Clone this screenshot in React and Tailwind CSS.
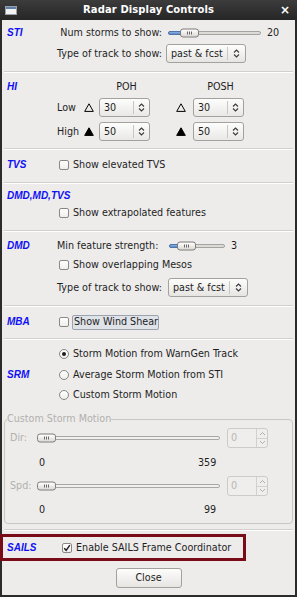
import React from "react";

function UpDown({ color = "#3a3a3a" }) {
  return (
    <svg width="7" height="11" viewBox="0 0 7 11">
      <path d="M1 4.5 L3.5 2 L6 4.5 M1 6.5 L3.5 9 L6 6.5" fill="none" stroke={color} strokeWidth="1.1" />
    </svg>
  );
}

function Combo({ className = "" }) {
  return (
    <div className={"h-[19px] w-[80px] flex items-center rounded-[3px] border border-[#a3a19d] bg-gradient-to-b from-[#fdfdfc] to-[#e6e5e2] " + className}>
      <span className="pl-[4px] flex-1 whitespace-nowrap">past &amp; fcst</span>
      <span className="w-px h-[13px] bg-[#c9c7c3]" />
      <span className="w-[17px] flex justify-center"><UpDown /></span>
    </div>
  );
}

function Spin({ value, className = "" }) {
  return (
    <div className={"h-[19px] w-[51px] flex items-center rounded-[3px] border border-[#a3a19d] bg-gradient-to-b from-[#fdfdfc] to-[#e9e8e5] " + className}>
      <span className="pl-[4px] flex-1">{value}</span>
      <span className="w-px h-[13px] bg-[#c9c7c3]" />
      <span className="w-[15px] flex justify-center"><UpDown /></span>
    </div>
  );
}

function DisabledSpin() {
  return (
    <div className="h-[20px] w-[41px] flex rounded-[3px] border border-[#cdcbc7] bg-[#efeeec]">
      <span className="flex-1 pl-[3px] flex items-center text-[#b8b6b2]">0</span>
      <div className="w-[11px] flex flex-col border-l border-[#d3d1cd]">
        <div className="flex-1 flex items-center justify-center border-b border-[#d3d1cd]">
          <svg width="7" height="5" viewBox="0 0 7 5"><path d="M1 4 L3.5 1.5 L6 4" fill="none" stroke="#b0aeaa" strokeWidth="1" /></svg>
        </div>
        <div className="flex-1 flex items-center justify-center">
          <svg width="7" height="5" viewBox="0 0 7 5"><path d="M1 1 L3.5 3.5 L6 1" fill="none" stroke="#b0aeaa" strokeWidth="1" /></svg>
        </div>
      </div>
    </div>
  );
}

function Thumb({ left }) {
  return (
    <div
      className="absolute top-1/2 -translate-y-1/2 w-[19px] h-[9px] rounded-[3px] border border-[#7f7d79] bg-gradient-to-b from-[#ffffff] to-[#dcdad6] flex items-center justify-center gap-[1px]"
      style={{ left }}
    >
      <span className="w-px h-[3px] bg-[#6b6965]" />
      <span className="w-px h-[3px] bg-[#6b6965]" />
      <span className="w-px h-[3px] bg-[#6b6965]" />
    </div>
  );
}

function Slider({ width, thumb, className = "", disabled = false }) {
  return (
    <div className={"relative h-[10px] shrink-0 " + className} style={{ width }}>
      <div className={"absolute left-0 right-0 top-[3px] h-[4px] rounded-full border " + (disabled ? "border-[#a9a7a3] bg-[#f1f0ee]" : "border-[#a5a39f] bg-[#dcdbd8]")} />
      {!disabled && (
        <div className="absolute left-0 top-[3px] h-[4px] rounded-full border border-[#4d74ad] bg-gradient-to-b from-[#8fb2e0] to-[#5a89c8]" style={{ width: thumb + 4 }} />
      )}
      <Thumb left={thumb} />
    </div>
  );
}

function Check({ checked = false }) {
  return (
    <div className="w-[10px] h-[10px] shrink-0 rounded-[2px] border border-[#8a8884] bg-gradient-to-b from-white to-[#efeeec] flex items-center justify-center">
      {checked && (
        <svg width="8" height="8" viewBox="0 0 8 8"><path d="M1.2 4.2 L3.2 6.3 L6.8 1.2" fill="none" stroke="#1e1e1e" strokeWidth="1.4" /></svg>
      )}
    </div>
  );
}

function Radio({ checked = false }) {
  return (
    <div className="w-[10px] h-[10px] shrink-0 rounded-full border border-[#8a8884] bg-gradient-to-b from-white to-[#efeeec] flex items-center justify-center">
      {checked && <div className="w-[4px] h-[4px] rounded-full bg-[#1e1e1e]" />}
    </div>
  );
}

function Tri({ filled }) {
  return (
    <svg width="10" height="9" viewBox="0 0 10 9">
      <path d="M5 0.8 L9.3 8.4 L0.7 8.4 Z" fill={filled ? "#000" : "none"} stroke="#000" strokeWidth="1" strokeLinejoin="miter" />
    </svg>
  );
}

const labelFont = "font-['Liberation_Sans',Arial,sans-serif] text-[10px] font-bold italic text-[#1010f5]";

function Label({ children, h = "h-[16px]" }) {
  return (
    <div className={"w-[55px] shrink-0 pl-[5px] flex items-center " + labelFont + " " + h}>{children}</div>
  );
}

function Sep() {
  return <div className="mx-[2px] h-[2px] border-t border-[#d2d0cc] border-b border-b-white shrink-0" />;
}

export default function App() {
  return (
    <div className="w-[297px] h-[597px] bg-[#2b2b2b] flex flex-col font-['DejaVu_Sans',sans-serif] text-[9.6px] text-[#1e1e1e] leading-none">
      {/* title bar */}
      <div className="h-[20px] shrink-0 grid grid-cols-[1fr_auto_1fr] items-center bg-gradient-to-b from-[#3c3c3c] to-[#262626]">
        <div className="pl-[5px] flex">
          <div className="w-[12px] h-[9px] border border-[#9aa0a8] bg-[#f2f2f2] flex flex-col">
            <div className="h-[2px] bg-[#5d7ea8]" />
          </div>
        </div>
        <div className="font-bold text-white text-[10px] tracking-[0.1px]">Radar Display Controls</div>
        <div className="flex justify-end pr-[7px] text-white font-bold text-[12px]">×</div>
      </div>

      <div className="flex-1 mx-[2px] mb-[2px] bg-[#edeceb] flex flex-col">
        {/* STI */}
        <div className="flex pt-[4px] pb-[8px]">
          <Label h="h-[18px]">STI</Label>
          <div className="flex flex-col gap-[2px]">
            <div className="h-[18px] flex items-center">
              <span className="w-[105px] flex justify-end whitespace-nowrap">Num storms to show:</span>
              <Slider className="ml-[6px]" width={93} thumb={12} />
              <span className="ml-[6px]">20</span>
            </div>
            <div className="h-[19px] flex items-center">
              <span className="w-[105px] flex justify-end whitespace-nowrap">Type of track to show:</span>
              <Combo className="ml-[4px]" />
            </div>
          </div>
        </div>
        <Sep />

        {/* HI */}
        <div className="flex flex-col pt-[6px] pb-[7px]">
          <div className="flex h-[16px] items-center">
            <Label>HI</Label>
            <span className="ml-[44px] w-[51px] text-center">POH</span>
            <span className="ml-[43px] w-[51px] text-center">POSH</span>
          </div>
          <div className="flex h-[19px] items-center mt-[3px]">
            <div className="w-[55px]" />
            <span className="w-[27px]">Low</span>
            <Tri />
            <Spin value="30" className="ml-[5px]" />
            <span className="ml-[26px]"><Tri /></span>
            <Spin value="30" className="ml-[7px]" />
          </div>
          <div className="flex h-[19px] items-center mt-[5px]">
            <div className="w-[55px]" />
            <span className="w-[27px]">High</span>
            <Tri filled />
            <Spin value="50" className="ml-[5px]" />
            <span className="ml-[26px]"><Tri filled /></span>
            <Spin value="50" className="ml-[7px]" />
          </div>
        </div>
        <Sep />

        {/* TVS */}
        <div className="flex pt-[7px] pb-[9px]">
          <Label>TVS</Label>
          <div className="flex items-center h-[16px] ml-[2px] gap-[4px]">
            <Check />
            <span>Show elevated TVS</span>
          </div>
        </div>
        <Sep />

        {/* DMD,MD,TVS */}
        <div className="flex flex-col pt-[4px] pb-[9px]">
          <Label>DMD,MD,TVS</Label>
          <div className="flex items-center h-[16px] ml-[57px] mt-[1px] gap-[4px]">
            <Check />
            <span>Show extrapolated features</span>
          </div>
        </div>
        <Sep />

        {/* DMD */}
        <div className="flex pt-[6px] pb-[8px]">
          <Label>DMD</Label>
          <div className="flex flex-col">
            <div className="h-[16px] flex items-center">
              <span className="w-[100px] whitespace-nowrap">Min feature strength:</span>
              <Slider className="ml-[12px]" width={56} thumb={8} />
              <span className="ml-[6px]">3</span>
            </div>
            <div className="flex items-center h-[16px] ml-[2px] mt-[3px] gap-[4px]">
              <Check />
              <span>Show overlapping Mesos</span>
            </div>
            <div className="h-[19px] flex items-center mt-[5px]">
              <span className="w-[106px] whitespace-nowrap">Type of track to show:</span>
              <Combo className="ml-[5px]" />
            </div>
          </div>
        </div>
        <Sep />

        {/* MBA */}
        <div className="flex pt-[7px] pb-[8px]">
          <Label>MBA</Label>
          <div className="flex items-center h-[16px] ml-[2px] gap-[3px]">
            <Check />
            <span className="h-[15px] w-[87px] pl-[1px] flex items-center rounded-[2px] border border-[#9aa3af] bg-[#dfe3e8] whitespace-nowrap">Show Wind Shear</span>
          </div>
        </div>
        <Sep />

        {/* SRM */}
        <div className="flex flex-col pt-[6px]">
          <div className="flex items-center h-[16px] ml-[57px] gap-[4px]">
            <Radio checked />
            <span>Storm Motion from WarnGen Track</span>
          </div>
          <div className="flex h-[16px] mt-[5px]">
            <Label>SRM</Label>
            <div className="flex items-center ml-[2px] gap-[4px]">
              <Radio />
              <span>Average Storm Motion from STI</span>
            </div>
          </div>
          <div className="flex items-center h-[16px] ml-[57px] mt-[4px] gap-[4px]">
            <Radio />
            <span>Custom Storm Motion</span>
          </div>
        </div>

        {/* Custom Storm Motion group */}
        <fieldset className="mx-[2px] mt-[10px] border border-[#c8c6c2] rounded-[4px] px-[3px] pb-[6px]">
          <legend className="text-[#b2b0ac] -ml-[1px] px-0 leading-[12px]">Custom Storm Motion</legend>
          <div className="flex items-center h-[20px] mt-[3px]">
            <span className="w-[29px] pl-[2px] text-[#b2b0ac]">Dir:</span>
            <Slider width={183} thumb={0} disabled />
            <span className="ml-[7px]"><DisabledSpin /></span>
          </div>
          <div className="flex items-center h-[14px] mt-[8px]">
            <span className="ml-[31px] w-[159px]">0</span>
            <span>359</span>
          </div>
          <div className="flex items-center h-[20px] mt-[6px]">
            <span className="w-[29px] pl-[2px] text-[#b2b0ac]">Spd:</span>
            <Slider width={183} thumb={0} disabled />
            <span className="ml-[7px]"><DisabledSpin /></span>
          </div>
          <div className="flex items-center h-[14px] mt-[7px]">
            <span className="ml-[31px] w-[165px]">0</span>
            <span>99</span>
          </div>
        </fieldset>
        <div className="h-[5px] shrink-0" />
        <Sep />

        {/* SAILS */}
        <div className="-ml-[2px] mt-[3px] w-[246px] h-[27px] shrink-0 border-[3px] border-[#7a0c18] flex items-center">
          <div className={"w-[57px] pl-[4px] " + labelFont}>SAILS</div>
          <div className="flex items-center ml-[2px] gap-[4px]">
            <Check checked />
            <span>Enable SAILS Frame Coordinator</span>
          </div>
        </div>

        <div className="flex justify-center mt-[7px]">
          <div className="w-[66px] h-[20px] rounded-[3px] border border-[#a3a19d] bg-gradient-to-b from-[#fdfdfc] to-[#e6e5e2] flex items-center justify-center">Close</div>
        </div>
      </div>
    </div>
  );
}
